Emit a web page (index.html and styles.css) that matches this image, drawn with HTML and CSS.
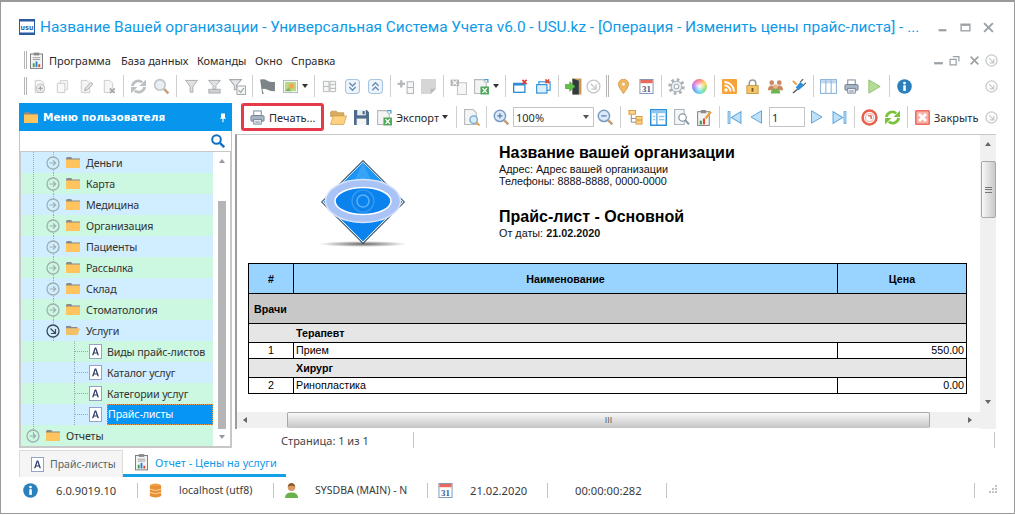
FILE: index.html
```html
<!DOCTYPE html>
<html lang="ru">
<head>
<meta charset="utf-8">
<title>USU</title>
<link rel="stylesheet" href="styles.css">
</head>
<body>
<svg class="defs" aria-hidden="true">
<symbol id="circ" viewBox="0 0 14 14"><circle cx="7" cy="7" r="6" fill="currentColor" stroke="#9fb0b0" stroke-width="1.3"/><path d="M3.500 7h6M7 4.300l2.700 2.700L7 9.700" fill="none" stroke="#9fb0b0" stroke-width="1.200"/></symbol>
<symbol id="circopen" viewBox="0 0 14 14"><circle cx="7" cy="7" r="6" fill="currentColor" stroke="#3d4a55" stroke-width="1.300"/><path d="M4.500 4.500l4.500 4.500M9.500 5v4.500H5" fill="none" stroke="#3d4a55" stroke-width="1.200"/></symbol>
<symbol id="circgo" viewBox="0 0 14 14"><circle cx="7" cy="7" r="6" fill="#fff" stroke="#c4c8c8" stroke-width="1.300"/><path d="M4.500 4.500l4.500 4.500M9.500 5v4.500H5" fill="none" stroke="#c4c8c8" stroke-width="1.200"/></symbol>
<symbol id="folder" viewBox="0 0 14 11"><path d="M0 1.500Q0 0 1.500 0H5l1.500 1.500H14V3H0z" fill="#8a8a8a"/><rect y="2.500" width="14" height="8.500" fill="#ffc45e"/></symbol>
<symbol id="folderopen" viewBox="0 0 16 11"><path d="M0 1Q0 0 1 0h4l1.500 1.500H13V4H0z" fill="#8a8a8a"/><path d="M0 11V3h16l-3 8z" fill="#f3c06a"/></symbol>
<symbol id="afile" viewBox="0 0 14 16"><rect x=".5" y=".5" width="13" height="15" fill="#fff" stroke="#8d9cc4"/><path d="M3.300 12L6.200 3.800h1.600L10.700 12H9.200l-.6-1.900H5.400L4.800 12zM5.800 9h2.400L7 5.400z" fill="#2b3a67"/></symbol>
<symbol id="report" viewBox="0 0 14 18"><rect x=".5" y="2" width="13" height="15.500" fill="#f3f3f3" stroke="#777"/><rect x="4" y=".5" width="6" height="3" fill="#888"/><path d="M3 6h8M3 8h8" stroke="#999"/><rect x="3" y="12" width="2" height="4" fill="#35a045"/><rect x="6" y="10" width="2" height="6" fill="#2b7fd8"/><rect x="9" y="13" width="2" height="3" fill="#e0492f"/></symbol>
<symbol id="printer" viewBox="0 0 16 16"><rect x="4" y="1" width="8" height="5" fill="#fff" stroke="#6f8296"/><rect x="1" y="6" width="14" height="6" rx="1" fill="#a9b6c4" stroke="#6f8296"/><rect x="4" y="10" width="8" height="5" fill="#fff" stroke="#6f8296"/><path d="M5.500 12h5M5.500 13.500h5" stroke="#9aa8b6"/></symbol>
<symbol id="gdoc" viewBox="0 0 16 16"><path d="M3.500 1.500h6l3 3v10h-9z" fill="#f5f5f5" stroke="#c8cbcd"/></symbol>
<symbol id="lens" viewBox="0 0 16 16"><circle cx="6.500" cy="6.500" r="5" fill="#e8eef2" stroke="#bfc5c9" stroke-width="1.500"/><path d="M10.500 10.500l4 4" stroke="#c3a27a" stroke-width="2.500"/></symbol>
<symbol id="funnel" viewBox="0 0 14 16"><path d="M.7 1.500h12.600L8.500 8v6h-3V8z" fill="#dfe1e3" stroke="#a8abae"/></symbol>
<symbol id="expd" viewBox="0 0 14 14"><rect x=".5" y=".5" width="13" height="13" rx="3" fill="#eef4fb" stroke="#a9c4df"/><path d="M4 3.500l3 3 3-3M4 7.500l3 3 3-3" fill="none" stroke="#6a8fb5" stroke-width="1.300"/></symbol>
<symbol id="coll" viewBox="0 0 14 14"><rect x=".5" y=".5" width="13" height="13" rx="3" fill="#eef4fb" stroke="#a9c4df"/><path d="M4 6.500l3-3 3 3M4 10.500l3-3 3 3" fill="none" stroke="#6a8fb5" stroke-width="1.300"/></symbol>
<symbol id="xls" viewBox="0 0 16 16"><path d="M1.500 1.500h8l3 3v10h-11z" fill="#f4f4f4" stroke="#b5b8ba"/><rect x="7" y="8" width="8" height="7.500" fill="#4fa85a"/><path d="M9 9.500l4 4.500M13 9.500l-4 4.500" stroke="#fff" stroke-width="1.300"/><path d="M10.500 1.500h3.500v3" fill="none" stroke="#4a9ad8" stroke-width="1.200"/></symbol>
<symbol id="win" viewBox="0 0 16 16"><rect x=".7" y="4.700" width="12" height="9.500" fill="#fff" stroke="#2a8fd8" stroke-width="1.400"/><rect x="1" y="5" width="11.500" height="2" fill="#2a8fd8"/><path d="M10 1l4.500 4.500M14.500 1L10 5.500" stroke="#e0402c" stroke-width="1.800"/></symbol>
<symbol id="lens2" viewBox="0 0 16 16"><circle cx="6.500" cy="6.500" r="5.300" fill="#dbe9fa" stroke="#7f9cc6" stroke-width="1.400"/><path d="M10.500 10.500l4 4" stroke="#c3a27a" stroke-width="2.500"/></symbol>
<symbol id="skip" viewBox="0 0 14 14"><path d="M13 1.500v11L4 7z" fill="#bfe1f7" stroke="#5fa6dc"/><rect x="1" y="1.500" width="1.800" height="11" fill="#bfe1f7" stroke="#5fa6dc" stroke-width=".8"/></symbol>
<symbol id="tri" viewBox="0 0 12 14"><path d="M11.500 .8v12.400L1 7z" fill="#bfe1f7" stroke="#5fa6dc"/></symbol>
<symbol id="info" viewBox="0 0 16 16"><circle cx="8" cy="8" r="7.800" fill="#2a80bd"/><circle cx="8" cy="4.300" r="1.500" fill="#fff"/><rect x="6.700" y="6.700" width="2.700" height="6" fill="#fff"/></symbol>
<symbol id="arrows" viewBox="0 0 16 16"><path d="M2.200 7.500A5.800 5.800 0 0 1 11.500 4" fill="none" stroke="currentColor" stroke-width="2.600"/><path d="M9 7.500h6V1.500z" fill="currentColor"/><path d="M13.800 8.500A5.800 5.800 0 0 1 4.500 12" fill="none" stroke="currentColor" stroke-width="2.600"/><path d="M7 8.500H1v6z" fill="currentColor"/></symbol>
</svg>

<div class="window">
  <header class="title-row">
    <svg class="logo-usu" viewBox="0 0 16 16"><rect x=".5" y=".5" width="15" height="15" fill="#fff" stroke="#2a5ba0"/><rect x="0" y="0" width="16" height="2.500" fill="#2a5ba0"/><rect x="0" y="13.500" width="16" height="2.500" fill="#2a5ba0"/><text x="8" y="10.500" text-anchor="middle" font-family="DejaVu Sans, sans-serif" font-size="5.500" font-weight="700" fill="#2a5ba0">USU</text></svg>
    <h1 class="title">Название Вашей организации - Универсальная Система Учета v6.0 - USU.kz - [Операция - Изменить цены прайс-листа] - ...</h1>
    <div class="win-btns">
      <svg viewBox="0 0 10 10" class="wb"><rect x="1.500" y="6.500" width="7" height="2" fill="#9aa0a4"/></svg>
      <svg viewBox="0 0 10 10" class="wb"><rect x="1" y="2" width="8" height="6" fill="none" stroke="#9aa0a4" stroke-width="1.200"/><rect x="1" y="2" width="8" height="1.500" fill="#9aa0a4"/></svg>
      <svg viewBox="0 0 10 10" class="wb"><path d="M1 1l8 8M9 1L1 9" stroke="#9aa0a4" stroke-width="1.700"/></svg>
    </div>
  </header>

  <nav class="menu-row">
    <span class="grip"></span>
    <svg class="menu-ic"><use href="#report"/></svg>
    <span class="mi mi-first">Программа</span><span class="mi">База данных</span><span class="mi">Команды</span><span class="mi">Окно</span><span class="mi">Справка</span>
    <div class="mdi-btns">
      <svg viewBox="0 0 10 10" class="mb mb-min"><rect x="1" y="6.500" width="8" height="2" fill="#9aa0a4"/></svg>
      <svg viewBox="0 0 10 10" class="mb"><path d="M3.500 1.500h5.500v4.500M1 4h5.500v5H1z" fill="none" stroke="#9aa0a4" stroke-width="1.100"/></svg>
      <svg viewBox="0 0 10 10" class="mb mb-close"><path d="M1.500 1.500l7 7M8.500 1.500l-7 7" stroke="#9aa0a4" stroke-width="1.500"/></svg>
      <svg class="go"><use href="#circgo"/></svg>
    </div>
  </nav>

  <div class="tool-row">
    <span class="grip"></span>
    <span class="c"><svg class="ic" viewBox="0 0 16 16"><use href="#gdoc"/><circle cx="9" cy="10" r="4.500" fill="#eee" stroke="#bbb"/><path d="M9 7.500v5M6.500 10h5" stroke="#aaa" stroke-width="1.300"/></svg></span>
    <span class="c"><svg class="ic" viewBox="0 0 16 16"><path d="M5.500 1.500h8v10h-8z" fill="#f5f5f5" stroke="#cdd0d2"/><path d="M2.500 4.500h8v10h-8z" fill="#f8f8f8" stroke="#c8cbcd"/></svg></span>
    <span class="c"><svg class="ic" viewBox="0 0 16 16"><use href="#gdoc"/><path d="M7 12.500l1-3 6-6 2 2-6 6z" fill="#e4e4e4" stroke="#a9a9a9"/></svg></span>
    <span class="c"><svg class="ic" viewBox="0 0 16 16"><use href="#gdoc"/><rect x="9" y="10" width="6" height="5" fill="#ddd"/><path d="M9.500 10l5 5M14.500 10l-5 5" stroke="#999" stroke-width="1.300"/></svg></span>
    <span class="s"></span>
    <span class="c"><svg class="ic big gray-arrows"><use href="#arrows"/></svg></span>
    <span class="c"><svg class="ic big"><use href="#lens"/></svg></span>
    <span class="s"></span>
    <span class="c"><svg class="ic"><use href="#funnel"/></svg></span>
    <span class="c"><svg class="ic" viewBox="0 0 16 16"><path d="M1.700 1.500h12.600L9.500 7v4h-3V7z" fill="#dfe1e3" stroke="#a8abae"/><rect x="2" y="11" width="12" height="4" fill="#cfd1d3" stroke="#a8abae"/></svg></span>
    <span class="c"><svg class="ic big" viewBox="0 0 16 16"><path d="M.7 1.500h11L7 7v4H5V7z" fill="#e4e6e8" stroke="#a8abae"/><rect x="7.500" y="7.500" width="8" height="8" fill="#f7f7f7" stroke="#a8abae"/><path d="M9 11.500l2 2 3-4" fill="none" stroke="#9aa" stroke-width="1.200"/></svg></span>
    <span class="s"></span>
    <span class="c"><svg class="ic big" viewBox="0 0 16 16"><path d="M1 1.500q4-1 7 1t7 1v9q-4 0-7-1.500t-5-.5L4.500 15H3z" fill="#7d8487"/></svg></span>
    <span class="c"><svg class="ic" viewBox="0 0 16 16"><rect x=".5" y="1.500" width="15" height="13" fill="#fff" stroke="#a9b6c0"/><rect x="2" y="3" width="12" height="10" fill="#b8d98a"/><circle cx="9" cy="7.500" r="3" fill="#f0a850"/><path d="M2 13l4-4 3 4z" fill="#7fb858"/></svg></span>
    <span class="dd gr"></span>
    <span class="s"></span>
    <span class="c"><svg class="ic" viewBox="0 0 14 16"><path d="M.5 2.500h6v11h-6zM.5 8h6M7.500 2.500h6v11h-6zM7.500 6h6M7.500 10h6" fill="#f6f6f6" stroke="#b4b8bb"/></svg></span>
    <span class="c"><svg class="ic"><use href="#expd"/></svg></span>
    <span class="c"><svg class="ic"><use href="#coll"/></svg></span>
    <span class="s"></span>
    <span class="c"><svg class="ic big" viewBox="0 0 16 16"><path d="M9.500 3.500h6v11h-6zM9.500 9h6" fill="#f6f6f6" stroke="#b4b8bb"/><path d="M4 2v7M.5 5.500h7" stroke="#b4b8bb" stroke-width="2.200"/></svg></span>
    <span class="c"><svg class="ic" viewBox="0 0 14 14"><path d="M0 0h14v9l-5 5H0z" fill="#d6d6d6"/><path d="M14 9l-5 5V9z" fill="#bbb"/></svg></span>
    <span class="s"></span>
    <span class="c"><svg class="ic big" viewBox="0 0 16 16"><path d="M7 4.500h8.500v11H7z" fill="#f6f6f6" stroke="#c4c7c9"/><rect x=".5" y="1.500" width="8" height="6" fill="#b5b7b9"/><path d="M2.500 2.500l4 4M6.500 2.500l-4 4" stroke="#fff" stroke-width="1.200"/></svg></span>
    <span class="c"><svg class="ic big"><use href="#xls"/></svg></span>
    <span class="dd"></span>
    <span class="s"></span>
    <span class="c"><svg class="ic"><use href="#win"/></svg></span>
    <span class="c"><svg class="ic" viewBox="0 0 16 16"><rect x="3" y="3" width="12" height="9" fill="#fff" stroke="#2a8fd8" stroke-width="1.200"/><rect x=".7" y="6" width="11" height="9" fill="#dcefff" stroke="#2a8fd8" stroke-width="1.200"/><path d="M10 .5l4 4M14 .5l-4 4" stroke="#e0402c" stroke-width="1.700"/></svg></span>
    <span class="s"></span>
    <span class="c"><svg class="ic big" viewBox="0 0 16 16"><path d="M7 .5h8.500v15H7z" fill="#c89858"/><path d="M7 .5l6 2v13H7z" fill="#2f3a42"/><path d="M.5 6h4V3.500L9.500 8l-5 4.500V10h-4z" fill="#62c04a" stroke="#3c9a30" stroke-width=".6"/></svg></span>
    <span class="c c-16"><svg class="ic"><use href="#circgo"/></svg></span>
    <span class="s dbl"></span>
    <span class="c"><svg class="ic" viewBox="0 0 12 16"><path d="M6 15.500C3 11 .7 8.500.7 5.500a5.300 5.300 0 0 1 10.600 0C11.300 8.500 9 11 6 15.500z" fill="#f3b864" stroke="#d19a48"/><circle cx="6" cy="5.500" r="2.200" fill="#fff3dc" stroke="#d19a48" stroke-width=".7"/></svg></span>
    <span class="c"><svg class="ic" viewBox="0 0 15 16"><rect x=".5" y=".5" width="14" height="15" fill="#fff" stroke="#7d92b5"/><rect x="1" y="1" width="13" height="3.500" fill="#e7685c"/><text x="7.500" y="13.500" text-anchor="middle" font-family="Liberation Serif, serif" font-size="9.500" font-weight="700" fill="#38598e">31</text></svg></span>
    <span class="s"></span>
    <span class="c"><svg class="ic big" viewBox="0 0 16 16"><circle cx="8" cy="8" r="6.400" fill="none" stroke="#aab2b8" stroke-width="2.800" stroke-dasharray="2.500 2.520"/><circle cx="8" cy="8" r="5" fill="#eef1f3" stroke="#aab2b8"/><circle cx="8" cy="8" r="2.200" fill="#fff" stroke="#aab2b8"/></svg></span>
    <span class="c"><span class="wheel"></span></span>
    <span class="s"></span>
    <span class="c"><svg class="ic" viewBox="0 0 15 15"><rect width="15" height="15" rx="1" fill="#f6a33a"/><circle cx="4" cy="11" r="1.700" fill="#fff"/><path d="M2.500 6.500a6 6 0 0 1 6 6M2.500 3a9.500 9.500 0 0 1 9.500 9.500" fill="none" stroke="#fff" stroke-width="1.800"/></svg></span>
    <span class="c"><svg class="ic" viewBox="0 0 14 16"><path d="M3.500 8V4.500a3.500 3.500 0 0 1 7 0V8" fill="none" stroke="#9a9a9a" stroke-width="1.600"/><rect x="1" y="7" width="12" height="8.500" fill="#f2c669" stroke="#c79b45"/><rect x="6" y="9.500" width="2" height="4" fill="#7b5a20"/></svg></span>
    <span class="c"><svg class="ic big" viewBox="0 0 18 16"><circle cx="5" cy="4" r="2.500" fill="#c88a62"/><circle cx="13" cy="4" r="2.500" fill="#c88a62"/><path d="M1 12q0-5 4-5t4 5zM9 12q0-5 4-5t4 5z" fill="#c88a62"/><circle cx="9" cy="8" r="2.500" fill="#e8b48c"/><path d="M4 15.500q0-5 5-5t5 5z" fill="#6eb550"/></svg></span>
    <span class="c"><svg class="ic" viewBox="0 0 16 16"><path d="M5 9l5-6 4 4-6 5z" fill="#2f8ed6"/><path d="M10 3l3-3M13 7l3-3" stroke="#666" stroke-width="1.300"/><path d="M7 11l-5 4" stroke="#555" stroke-width="1.500"/><path d="M2 2l4 4" stroke="#e6a23a" stroke-width="2"/></svg></span>
    <span class="s"></span>
    <span class="c"><svg class="ic big" viewBox="0 0 16 14"><rect x=".5" y=".5" width="15" height="13" fill="#fff" stroke="#8db4d8"/><rect x="1" y="1" width="14" height="3" fill="#bcd7ef"/><path d="M5.500 1v12.500M10.500 1v12.500" stroke="#8db4d8"/></svg></span>
    <span class="c"><svg class="ic"><use href="#printer"/></svg></span>
    <span class="c"><svg class="ic" viewBox="0 0 14 16"><path d="M1 1l12 7-12 7z" fill="#b6dd98" stroke="#8fbe70"/></svg></span>
    <span class="s"></span>
    <span class="c"><svg class="ic"><use href="#info"/></svg></span>
    <svg class="go push"><use href="#circgo"/></svg>
  </div>

  <main class="main">
    <aside class="side">
      <div class="side-head">
        <svg class="side-folder" viewBox="0 0 14 11"><use href="#folder"/></svg>
        <span class="side-title">Меню пользователя</span>
        <svg class="pin" viewBox="0 0 10 12"><path d="M2.500 1h5v5l1.500 1.500H1L2.500 6zM4.300 7.500h1.400V12H4.300z" fill="#fff"/></svg>
      </div>
      <div class="side-search">
        <svg class="search" viewBox="0 0 14 14"><circle cx="5.500" cy="5.500" r="4.300" fill="none" stroke="#0f6fc4" stroke-width="2"/><path d="M8.800 8.800l4.400 4.400" stroke="#0f6fc4" stroke-width="2.400"/></svg>
      </div>
      <div class="tree-box">
        <div class="tree">
          <div class="row b l1"><svg class="tw"><use href="#circ"/></svg><svg class="fd"><use href="#folder"/></svg><span>Деньги</span></div>
          <div class="row g l1"><svg class="tw"><use href="#circ"/></svg><svg class="fd"><use href="#folder"/></svg><span>Карта</span></div>
          <div class="row b l1"><svg class="tw"><use href="#circ"/></svg><svg class="fd"><use href="#folder"/></svg><span>Медицина</span></div>
          <div class="row g l1"><svg class="tw"><use href="#circ"/></svg><svg class="fd"><use href="#folder"/></svg><span>Организация</span></div>
          <div class="row b l1"><svg class="tw"><use href="#circ"/></svg><svg class="fd"><use href="#folder"/></svg><span>Пациенты</span></div>
          <div class="row g l1"><svg class="tw"><use href="#circ"/></svg><svg class="fd"><use href="#folder"/></svg><span>Рассылка</span></div>
          <div class="row b l1"><svg class="tw"><use href="#circ"/></svg><svg class="fd"><use href="#folder"/></svg><span>Склад</span></div>
          <div class="row g l1"><svg class="tw"><use href="#circ"/></svg><svg class="fd"><use href="#folder"/></svg><span>Стоматология</span></div>
          <div class="row b l1"><svg class="tw"><use href="#circopen"/></svg><svg class="fd" viewBox="0 0 16 11"><use href="#folderopen"/></svg><span>Услуги</span></div>
          <div class="row g l2"><svg class="af"><use href="#afile"/></svg><span>Виды прайс-листов</span></div>
          <div class="row b l2"><svg class="af"><use href="#afile"/></svg><span>Каталог услуг</span></div>
          <div class="row g l2"><svg class="af"><use href="#afile"/></svg><span>Категории услуг</span></div>
          <div class="row b l2"><svg class="af"><use href="#afile"/></svg><span class="sel">Прайс-листы</span></div>
          <div class="row g l0"><svg class="tw"><use href="#circ"/></svg><svg class="fd"><use href="#folder"/></svg><span>Отчеты</span></div>
        </div>
        <div class="tree-scroll">
          <span class="tarrow up"></span>
          <span class="tthumb"></span>
          <span class="tarrow down"></span>
        </div>
      </div>
    </aside>

    <section class="content">
      <div class="rep-tools">
        <button class="print-btn"><svg class="ic"><use href="#printer"/></svg><span>Печать...</span></button>
        <span class="c"><svg class="ic big" viewBox="0 0 16 14"><path d="M.5 2.500Q.5 1 2 1h4l1 1.500h6V6H.5z" fill="#d8ab60" stroke="#b98c42" stroke-width=".6"/><path d="M.5 13.500L3 5.500h12.500l-2.500 8z" fill="#ffd27f" stroke="#d29c4a" stroke-width=".7"/></svg></span>
        <span class="c"><svg class="ic" viewBox="0 0 14 14"><path d="M0 0h12l2 2v12H0z" fill="#4d6b8a"/><rect x="3" y="0" width="8" height="5" fill="#e8edf2"/><rect x="8" y="1" width="2" height="3" fill="#4d6b8a"/><rect x="2.500" y="8" width="9" height="6" fill="#f3f5f7"/></svg></span>
        <span class="c"><svg class="ic big"><use href="#xls"/></svg></span>
        <span class="lbl">Экспорт</span><span class="dd exp"></span>
        <span class="s s5"></span>
        <span class="c"><svg class="ic big" viewBox="0 0 16 16"><path d="M1.500 .5h8l3 3v11h-11z" fill="#f4f4f4" stroke="#b5b8ba"/><circle cx="10" cy="10" r="3.500" fill="#d6ecfb" stroke="#6ea6cf" stroke-width="1.200"/><path d="M12.500 12.500l3 3" stroke="#d8a24a" stroke-width="1.800"/></svg></span>
        <span class="s"></span>
        <span class="c"><svg class="ic big" viewBox="0 0 16 16"><use href="#lens2"/><path d="M6.500 4v5M4 6.500h5" stroke="#5a7fb0" stroke-width="1.200"/></svg></span>
        <span class="combo">100%<span class="combo-arrow"></span></span>
        <span class="c"><svg class="ic big" viewBox="0 0 16 16"><use href="#lens2"/><path d="M4 6.500h5" stroke="#5a7fb0" stroke-width="1.200"/></svg></span>
        <span class="s"></span>
        <span class="c"><svg class="ic" viewBox="0 0 15 16"><path d="M3 5v8h5M3 9h5" fill="none" stroke="#888"/><rect x=".5" y=".5" width="7" height="4" fill="#fbd38a" stroke="#d99a3a"/><rect x="8" y="7" width="6.500" height="3.500" fill="#fbd38a" stroke="#d99a3a"/><rect x="8" y="11.500" width="6.500" height="3.500" fill="#fbd38a" stroke="#d99a3a"/></svg></span>
        <span class="c"><svg class="ic big" viewBox="0 0 16 16"><rect x=".7" y=".7" width="14.600" height="14.600" fill="#fff" stroke="#2a8fd8" stroke-width="1.400"/><rect x="1" y="1" width="14" height="3" fill="#8cc6ee"/><path d="M6.500 4v11" stroke="#2a8fd8"/><path d="M3 7h2M3 10h2M8.500 7h5M8.500 10h5" stroke="#8cc6ee" stroke-width="1.300"/></svg></span>
        <span class="c"><svg class="ic big" viewBox="0 0 16 16"><path d="M1.500 .5h9v14h-9z" fill="#f4f6f8" stroke="#aab4be"/><circle cx="9" cy="8" r="3.500" fill="#fff" stroke="#8a98a6" stroke-width="1.200"/><path d="M11.500 10.500l3.500 4" stroke="#8a98a6" stroke-width="2"/></svg></span>
        <span class="c"><svg class="ic big" viewBox="0 0 16 16"><rect x="1.500" y="2.500" width="11" height="13" fill="#f3f3f3" stroke="#8a8a8a"/><rect x="4.500" y="1" width="5" height="3" fill="#8a8a8a"/><rect x="3.500" y="11" width="2" height="3.500" fill="#35a045"/><rect x="6.500" y="9" width="2" height="5.500" fill="#e0492f"/><path d="M9 9l5-6.500" stroke="#e8a23a" stroke-width="2.200"/></svg></span>
        <span class="s"></span>
        <span class="c"><svg class="ic"><use href="#skip"/></svg></span>
        <span class="c c-23"><svg class="tr"><use href="#tri"/></svg></span>
        <span class="page-input">1</span>
        <span class="c"><svg class="tr flip"><use href="#tri"/></svg></span>
        <span class="c"><svg class="ic flip"><use href="#skip"/></svg></span>
        <span class="s"></span>
        <span class="c"><svg class="ic big" viewBox="0 0 16 16"><circle cx="8" cy="8" r="6.500" fill="#fff" stroke="#e8604c" stroke-width="2.400"/><circle cx="8" cy="8" r="3.800" fill="#fff" stroke="#e8b0a8"/><path d="M6.500 6.500h3v3" fill="none" stroke="#c9594a" stroke-width="1.200"/></svg></span>
        <span class="c"><svg class="ic big green-arrows"><use href="#arrows"/></svg></span>
        <span class="s"></span>
        <span class="c"><svg class="ic" viewBox="0 0 15 15"><rect width="15" height="15" rx="1.500" fill="#ee6a5e"/><rect x="1.500" y="1.500" width="12" height="12" fill="#f7b3aa"/><path d="M4 4l7 7M11 4l-7 7" stroke="#fff" stroke-width="2.600"/></svg></span>
        <span class="lbl">Закрыть</span>
        <svg class="go push"><use href="#circgo"/></svg>
      </div>

      <div class="report">
        <div class="rep-main">
          <div class="viewport">
            <div class="rep-head">
              <div class="rep-logo">
                <svg class="diamond" viewBox="0 0 84 90">
                  <defs><radialGradient id="sh"><stop offset="0" stop-color="#666"/><stop offset="1" stop-color="#fff"/></radialGradient></defs>
                  <ellipse cx="42" cy="84" rx="44" ry="3" fill="url(#sh)"/>
                  <path d="M42 0L84 42 42 84 0 42z" fill="#14304c"/>
                  <path d="M42 1.200L82.800 42 42 82.800 1.200 42z" fill="#fff"/>
                  <path d="M42 2.600L81.400 42 42 81.400 2.600 42z" fill="#0a83ee"/>
                  <path d="M42 2.600L81.400 42H2.600z" fill="#1c95f5"/>
                  <path d="M42 2.600L60 42H24z" fill="#50b4f8" fill-opacity=".5"/>
                  <ellipse cx="42" cy="41" rx="37.500" ry="21.500" fill="#a9c3f6" stroke="#d7e4fb" stroke-width="1.500"/>
                  <ellipse cx="42" cy="41" rx="28" ry="13.500" fill="#0a83ee" stroke="#fff" stroke-width="1.500"/>
                  <circle cx="42" cy="41" r="11" fill="none" stroke="#3a9df0" stroke-width="1.200"/>
                  <circle cx="42" cy="41" r="6" fill="none" stroke="#5cb2f5" stroke-width="1.500"/>
                </svg>
              </div>
              <div class="rep-info">
                <h2 class="org">Название вашей организации</h2>
                <p class="addr addr-first">Адрес: Адрес вашей организации</p>
                <p class="addr">Телефоны: 8888-8888, 0000-0000</p>
                <h2 class="org doc">Прайс-лист - Основной</h2>
                <p class="addr date">От даты: <b>21.02.2020</b></p>
              </div>
            </div>
            <table class="price">
              <colgroup><col class="col-n"><col class="col-name"><col class="col-p"></colgroup>
              <tr class="th"><td>#</td><td>Наименование</td><td>Цена</td></tr>
              <tr class="grp"><td colspan="3">Врачи</td></tr>
              <tr class="sub"><td colspan="3">Терапевт</td></tr>
              <tr class="item"><td class="num">1</td><td>Прием</td><td class="money">550.00</td></tr>
              <tr class="sub"><td colspan="3">Хирург</td></tr>
              <tr class="item"><td class="num">2</td><td>Ринопластика</td><td class="money">0.00</td></tr>
            </table>
          </div>
          <div class="hscroll">
            <span class="sarrow left"></span>
            <span class="hthumb"><span class="grips">III</span></span>
            <span class="sarrow right"></span>
          </div>
        </div>
        <div class="vscroll">
          <span class="sarrow up"></span>
          <span class="vthumb"><span class="vgrips"></span></span>
          <span class="sarrow down"></span>
        </div>
      </div>

      <div class="page-line">
        <span class="pg">Страница: 1 из 1</span>
        <span class="pg-sep"></span>
        <span class="pg-sep end"></span>
      </div>
    </section>
  </main>

  <div class="tabs">
    <div class="tab off"><svg class="af"><use href="#afile"/></svg><span>Прайс-листы</span></div>
    <div class="tab on"><svg class="rep-ic"><use href="#report"/></svg><span>Отчет - Цены на услуги</span></div>
  </div>

  <footer class="status">
    <svg class="st-ic st-a"><use href="#info"/></svg><span class="st st-ver">6.0.9019.10</span><span class="st-sep sp1"></span>
    <svg class="st-ic st-db" viewBox="0 0 13 16"><ellipse cx="6.500" cy="3" rx="6" ry="2.500" fill="#f0a24a"/><rect x=".5" y="3" width="12" height="10" fill="#e88f35"/><ellipse cx="6.500" cy="13" rx="6" ry="2.500" fill="#e88f35"/><path d="M.5 6.500q6 3 12 0M.5 10q6 3 12 0" fill="none" stroke="#ffd9a8"/></svg><span class="st st-host">localhost (utf8)</span><span class="st-sep sp2"></span>
    <svg class="st-ic st-us" viewBox="0 0 16 16"><circle cx="8" cy="4.500" r="4" fill="#d99868"/><path d="M4 4q1-4 4-4t4 4q-4-2-8 0z" fill="#8a5a2a"/><path d="M1 16q0-6 7-6t7 6z" fill="#6cb04a"/></svg><span class="st st-user">SYSDBA (MAIN) - N</span><span class="st-sep sp3"></span>
    <svg class="st-ic st-cal" viewBox="0 0 15 16"><rect x=".5" y=".5" width="14" height="15" fill="#fff" stroke="#7d92b5"/><rect x="1" y="1" width="13" height="3.500" fill="#e7685c"/><text x="7.500" y="13.500" text-anchor="middle" font-family="Liberation Serif, serif" font-size="9.500" font-weight="700" fill="#38598e">31</text></svg><span class="st st-date">21.02.2020</span><span class="st-sep sp4"></span>
    <span class="st st-time">00:00:00:282</span><span class="st-sep sp5"></span>
    <span class="st-sep sp6"></span>
    <svg class="st-grip" viewBox="0 0 12 12"><path d="M9 2h2M6 5h2M9 5h2M3 8h2M6 8h2M9 8h2" stroke="#888" stroke-width="1.200"/></svg>
  </footer>
</div>
</body>
</html>
```
FILE: styles.css
```css
* { box-sizing: border-box; }
html, body { margin: 0; padding: 0; }
body { width: 1015px; height: 515px; overflow: hidden; background: #fff; font-family: "Noto Sans", sans-serif; color: #333; }
.defs { width: 0; height: 0; display: block; overflow: hidden; }
.window { width: 1015px; height: 514px; border: 1px solid #9a9a9a; border-top-width: 2px; background: #fff; overflow: hidden; }

.title-row { height: 50px; display: flex; align-items: center; padding-left: 18px; }
.logo-usu { width: 16px; height: 16px; flex: none; }
.title { margin: 0 0 0 5px; font: 400 15.4px Roboto, sans-serif; color: #0e9ae8; white-space: nowrap; width: 882px; }
.win-btns { display: flex; margin-left: 15px; gap: 12px; }
.wb { width: 11px; height: 11px; }

.menu-row { height: 16px; display: flex; align-items: center; padding-left: 23px; padding-right: 16px; font-size: 11px; color: #2b2b2b; }
.grip { width: 3px; height: 18px; border-left: 1px solid #b5b5b5; border-right: 1px solid #b5b5b5; flex: none; }
.menu-ic { width: 13px; height: 17px; margin-left: 3px; margin-right: 6px; }
.mi { margin-right: 8.5px; white-space: nowrap; }
.mi-first { margin-right: 10px; }
.mdi-btns { margin-left: auto; display: flex; align-items: center; gap: 9px; }
.mb { width: 11px; height: 11px; }
.mb-min { margin-right: -4px; }
.mb-close { margin-right: -4px; }
.go { width: 13px; height: 13px; flex: none; display: block; }
.push { margin-left: auto; }

.tool-row { height: 24px; margin-top: 6px; display: flex; align-items: center; padding-left: 23px; padding-right: 16px; }
.tool-row .grip + .c { margin-left: 1px; }
.c { width: 23px; height: 22px; flex: none; display: flex; align-items: center; justify-content: center; }
.c-16 { width: 16px; }
.ic { width: 15px; height: 15px; display: block; flex: none; }
.ic.big { width: 17px; height: 17px; }
.gray-arrows { color: #bcbfc1; }
.green-arrows { color: #79c23a; }
.s { width: 1px; height: 22px; margin: 0 3px; background: #cfcfcf; flex: none; }
.s.dbl { width: 3px; margin: 0 3px 0 5px; background: none; border-left: 1px solid #b5b5b5; border-right: 1px solid #b5b5b5; }
.s.s5 { margin-left: 5px; }
.dd { width: 9px; height: 22px; flex: none; position: relative; }
.dd::after { content: ""; position: absolute; left: 0; top: 9px; border: 3px solid transparent; border-top: 4px solid #333; }
.dd.exp { margin-left: 2px; }
.wheel { width: 15px; height: 15px; border-radius: 50%; background: radial-gradient(circle, #fff 0, rgba(255,255,255,.3) 45%, transparent 70%), conic-gradient(#ff7070, #ffd24a, #6fdd6f, #50d8e8, #5f8cf0, #d868e0, #ff7070); }

.main { height: 347px; margin-top: 5px; display: flex; padding-left: 18px; padding-right: 16px; }
.side { width: 213px; flex: none; display: flex; flex-direction: column; }
.side-head { height: 28px; background: #0796ec; display: flex; align-items: center; padding-left: 5px; color: #fff; }
.side-folder { width: 14px; height: 11px; }
.side-title { margin-left: 5px; font: 700 10.5px "DejaVu Sans", sans-serif; white-space: nowrap; }
.pin { width: 8px; height: 11px; margin-left: auto; margin-right: 5px; }
.side-search { height: 20px; display: flex; justify-content: flex-end; align-items: center; padding-right: 6px; border-left: 1px solid #c4c4c4; border-right: 1px solid #c4c4c4; }
.search { width: 14px; height: 14px; }
.tree-box { height: 297px; border: 2px solid #c8c8c8; border-top-width: 1px; display: flex; }
.tree { width: 192px; flex: none; position: relative; }
.tree::before { content: ""; position: absolute; z-index: 1; left: 12px; top: 0; height: 285px; border-left: 1px dotted #9aa; }
.row { height: 21px; display: flex; align-items: center; font-size: 10.7px; letter-spacing: -.15px; color: #333; white-space: nowrap; position: relative; }
.row.b { background: #d0eeff; }
.row.g { background: #ccf7e0; }
.l1::before { content: ""; position: absolute; left: 32px; top: 0; height: 21px; border-left: 1px dotted #9aa; }
.l2::before { content: ""; position: absolute; left: 53px; top: 0; height: 21px; border-left: 1px dotted #9aa; }
.l2::after { content: ""; position: absolute; left: 54px; top: 10px; width: 13px; border-top: 1px dotted #9aa; }
.tw { width: 14px; height: 14px; flex: none; position: relative; }
.b .tw { color: #d0eeff; }
.g .tw { color: #ccf7e0; }
.l0 { padding-left: 5px; }
.l1 { padding-left: 25px; }
.l2 { padding-left: 68px; }
.fd { width: 14px; height: 11px; margin: 0 6px; flex: none; }
.af { width: 13px; height: 15px; flex: none; margin-right: 5px; }
.sel { flex: 1; height: 21px; line-height: 21px; background: #0695f5; color: #fff; padding-left: 1px; outline: 1px dotted #e89a50; outline-offset: -1px; }
.tree-scroll { width: 17px; flex: none; display: flex; flex-direction: column; align-items: center; background: #fff; }
.tarrow { width: 0; height: 0; border: 3px solid transparent; flex: none; }
.tarrow.up { margin-top: 7px; border-bottom: 4px solid #999; border-top: 0; }
.tarrow.down { margin-top: 6px; border-top: 4px solid #999; border-bottom: 0; }
.tthumb { width: 8px; height: 228px; margin-top: 38px; background: #b5b5b5; flex: none; }

.content { flex: 1; margin-left: 3px; min-width: 0; display: flex; flex-direction: column; }
.rep-tools { height: 28px; display: flex; align-items: center; padding-left: 6px; font-size: 11px; color: #2b2b2b; }
.print-btn { width: 83px; height: 28px; border: 3px solid #e63a48; border-radius: 3px; background: #fff; display: flex; align-items: center; padding: 0 0 0 6px; gap: 4px; margin-right: 3px; font: inherit; color: inherit; flex: none; white-space: nowrap; }
.lbl { white-space: nowrap; width: 44px; flex: none; }
.combo { width: 81px; height: 20px; border: 1px solid #c4c4c4; padding-left: 2px; display: flex; align-items: center; position: relative; flex: none; }
.combo-arrow { position: absolute; right: 4px; top: 7px; border: 3.5px solid transparent; border-top: 4px solid #555; }
.c-23 { justify-content: flex-start; padding-left: 4px; }
.tr { width: 12px; height: 14px; display: block; }
.flip { transform: scaleX(-1); }
.page-input { width: 36px; height: 20px; border: 1px solid #c4c4c4; padding-left: 2px; display: flex; align-items: center; flex: none; }

.report { height: 296px; margin-top: 3px; margin-right: 2px; display: flex; border-left: 2px solid #9c9c9c; border-top: 1px solid #c8c8c8; }
.rep-main { flex: 1; min-width: 0; display: flex; flex-direction: column; }
.viewport { flex: 1; min-height: 0; overflow: hidden; background: #fff; padding-left: 11px; }
.rep-head { height: 128px; display: flex; font-family: "Liberation Sans", sans-serif; color: #000; }
.rep-logo { width: 251px; flex: none; padding: 25px 0 0 73px; }
.diamond { width: 84px; height: 90px; display: block; }
.rep-info { padding-top: 9px; }
.org { margin: 0; font: 700 16px/18px "Liberation Sans", sans-serif; color: #000; white-space: nowrap; }
.addr { margin: 0; font-size: 10.8px; line-height: 12px; color: #111; white-space: nowrap; }
.addr-first { margin-top: 1px; }
.org.doc { margin-top: 21px; }
.date { margin-top: 1px; }
.price { border-collapse: collapse; table-layout: fixed; width: 719px; font: 10.7px "Liberation Sans", sans-serif; color: #000; }
.col-n { width: 45px; }
.col-name { width: 544px; }
.col-p { width: 129px; }
.price td { border: 1px solid #000; padding: 0 2px; white-space: nowrap; }
.th td { height: 30px; background: #99d3ff; font-weight: 700; text-align: center; }
.grp td { height: 30px; background: #c8c8c8; font-weight: 700; padding-left: 5px; }
.price .sub td { height: 19px; background: #e6e6e6; font-weight: 700; padding-left: 47px; }
.price .item td { height: 16px; padding-bottom: 1px; line-height: 13px; }
.num { text-align: center; }
.money { text-align: right; }

.hscroll { height: 16px; background: #f0f0f0; display: flex; align-items: center; flex: none; margin-bottom: 1px; padding-left: 6px; }
.hthumb { width: 643px; height: 16px; margin-left: 40px; border: 1px solid #a8a8a8; border-bottom-color: #c4c4c4; border-radius: 2px; background: linear-gradient(#f8f8f8, #c8c8c8); display: flex; align-items: center; justify-content: center; }
.grips { font: 9px "Liberation Sans", sans-serif; color: #666; }
.sarrow { width: 0; height: 0; flex: none; border: 3px solid transparent; }
.sarrow.left { border-right: 4px solid #666; border-left: 0; }
.sarrow.right { border-left: 4px solid #666; border-right: 0; margin-left: 38px; }
.sarrow.up { border-bottom: 4px solid #666; border-top: 0; margin-top: 7px; }
.sarrow.down { border-top: 4px solid #666; border-bottom: 0; margin-top: 182px; }
.vscroll { width: 16px; flex: none; background: #f0f0f0; display: flex; flex-direction: column; align-items: center; }
.vthumb { width: 15px; height: 57px; margin-top: 15px; border: 1px solid #a8a8a8; border-radius: 2px; background: linear-gradient(90deg, #f8f8f8, #c8c8c8); flex: none; display: flex; align-items: center; justify-content: center; }
.vgrips { width: 7px; height: 6px; border-top: 1px solid #777; border-bottom: 1px solid #777; background: linear-gradient(#777, #777) center / 100% 1px no-repeat; }

.page-line { height: 20px; display: flex; align-items: center; font-size: 11px; color: #444; margin-top: 1px; }
.pg { margin-left: 46px; width: 132px; white-space: nowrap; }
.pg-sep { width: 1px; height: 16px; background: #c4c4c4; flex: none; }
.pg-sep.end { margin-left: 580px; }

.tabs { height: 27px; display: flex; padding-left: 18px; }
.tab { display: flex; align-items: center; flex: none; white-space: nowrap; }
.tab.off { width: 104px; background: #f5f5f5; border: 1px solid #dcdcdc; border-bottom: 0; padding-left: 11px; color: #566; font-size: 10.5px; }
.tab.off .af { margin-right: 6px; }
.tab.on { width: 163px; border-bottom: 3px solid #12a0e8; padding-left: 12px; color: #0e9ae8; font-size: 10.95px; }
.rep-ic { width: 13px; height: 18px; flex: none; margin-right: 7px; }

.status { height: 26px; display: flex; align-items: center; font-size: 11.2px; color: #3a3a3a; }
.st { white-space: nowrap; flex: none; }
.st-ic { width: 15px; height: 15px; flex: none; display: block; }
.st-sep { width: 1px; height: 15px; background: #c4c4c4; flex: none; }
.st-a { margin-left: 22px; }
.st-ver { margin-left: 18px; width: 62px; }
.sp1 { margin-left: 19px; }
.st-db { margin-left: 11px; width: 13px; }
.st-host { margin-left: 17px; width: 75px; font-size: 10.5px; }
.sp2 { margin-left: 19px; }
.st-us { margin-left: 10px; }
.st-user { margin-left: 16px; width: 93px; font-size: 10.5px; }
.sp3 { margin-left: 19px; }
.st-cal { margin-left: 10px; }
.st-date { margin-left: 17px; width: 56px; }
.sp4 { margin-left: 21px; }
.st-time { margin-left: 27px; width: 67px; }
.sp5 { margin-left: 24px; }
.sp6 { margin-left: 307px; }
.st-grip { width: 12px; height: 12px; margin-left: 11px; flex: none; }
```
